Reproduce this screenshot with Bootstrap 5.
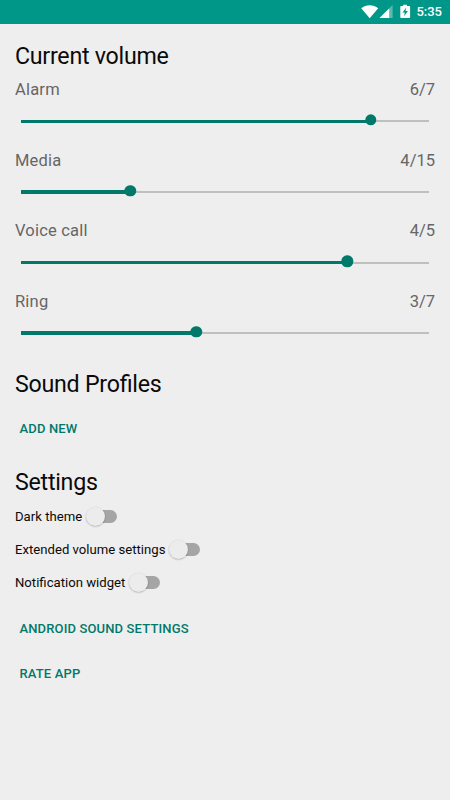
<!DOCTYPE html>
<html lang="en">
<head>
<meta charset="utf-8">
<meta name="viewport" content="width=device-width, initial-scale=1">
<title>Current volume</title>
<link href="https://cdn.jsdelivr.net/npm/bootstrap@5.3.0/dist/css/bootstrap.min.css" rel="stylesheet">
<style>
body{background:#eee;font-family:Roboto,sans-serif;color:#0a0a0a;height:800px;overflow:hidden}
.status{height:23.5px;background:#009688;color:#fff;padding-right:8px}
.clock{font-size:13px;font-weight:500;line-height:24px;margin-left:4px;padding-top:1px}
.screen{padding:18px 15px 0}
.heading{font-size:23.2px;letter-spacing:-.25px;font-feature-settings:"liga" 1;line-height:28px;font-weight:400;margin:0}
.volume{height:70.67px;font-size:16.5px;line-height:22px;color:#666}
.volume-name{letter-spacing:.2px}
.slider{height:40px;padding:0 6px 0 6.3px;margin-top:-1px}
.track{height:2px;background:#bfbfbf;top:1.3px}
.fill{height:3.4px;background:#00796b;left:0;top:-.8px}
.knob{width:11.4px;height:11.4px;border-radius:50%;background:#00796b;top:-.3px;transform:translate(-50%,-50%)}
.volumes{margin:9.5px 0 8px}
.action{font-size:13px;font-weight:500;letter-spacing:.14px;line-height:45px;color:#00796b;padding:0 4.5px;border:0;background:none;display:block}
.profiles{margin:8px 0 17px}
.option{height:33px;font-size:13.15px;line-height:33px}
.options{margin:4.5px 0 7px}
.switch{width:31px;height:13px;border-radius:7px;background:#a5a5a5;margin-left:3.6px;background-clip:content-box;padding-left:8px}
.switch span{width:19px;height:19px;border-radius:50%;background:#ececec;box-shadow:0 .6px 1.6px rgba(0,0,0,.3);left:0;top:-3.5px}
</style>
</head>
<body>
<header class="status d-flex align-items-center justify-content-end">
<svg width="51" height="23" viewBox="361 0 51 23" fill="#fff" aria-hidden="true">
<path d="M361.2 8.2C366 4.2 373.4 4.2 378.2 8.2L369.7 18.2Z"/>
<path opacity=".35" d="M392.6 5V18H379.5Z"/><path d="M389.2 8.4V18H379.5Z"/>
<path d="M403.2 4.7h3.7v1.2h2.4a.8.8 0 0 1 .8.8v10.5a.8.8 0 0 1-.8.8h-8.2a.8.8 0 0 1-.8-.8V6.7a.8.8 0 0 1 .8-.8h2.1Z"/>
<path fill="#009688" d="M406.2 7.5L402.6 12.6H404.8L404.1 16.3L407.9 11.1H405.5Z"/>
</svg>
<span class="clock">5:35</span>
</header>
<main class="screen">
<h1 class="heading">Current volume</h1>
<section class="volumes">
<div class="volume"><div class="d-flex justify-content-between"><span class="volume-name">Alarm</span><span>6/7</span></div><div class="slider d-flex align-items-center"><div class="track position-relative w-100"><div class="fill position-absolute" style="width:85.7%"></div><div class="knob position-absolute" style="left:85.7%"></div></div></div></div>
<div class="volume"><div class="d-flex justify-content-between"><span class="volume-name">Media</span><span>4/15</span></div><div class="slider d-flex align-items-center"><div class="track position-relative w-100"><div class="fill position-absolute" style="width:26.7%"></div><div class="knob position-absolute" style="left:26.7%"></div></div></div></div>
<div class="volume"><div class="d-flex justify-content-between"><span class="volume-name">Voice call</span><span>4/5</span></div><div class="slider d-flex align-items-center"><div class="track position-relative w-100"><div class="fill position-absolute" style="width:80%"></div><div class="knob position-absolute" style="left:80%"></div></div></div></div>
<div class="volume"><div class="d-flex justify-content-between"><span class="volume-name">Ring</span><span>3/7</span></div><div class="slider d-flex align-items-center"><div class="track position-relative w-100"><div class="fill position-absolute" style="width:42.9%"></div><div class="knob position-absolute" style="left:42.9%"></div></div></div></div>
</section>
<h2 class="heading">Sound Profiles</h2>
<div class="profiles"><button class="action">ADD NEW</button></div>
<h2 class="heading">Settings</h2>
<section class="options">
<div class="option d-flex align-items-center"><span>Dark theme</span><div class="switch position-relative"><span class="position-absolute"></span></div></div>
<div class="option d-flex align-items-center"><span>Extended volume settings</span><div class="switch position-relative"><span class="position-absolute"></span></div></div>
<div class="option d-flex align-items-center"><span>Notification widget</span><div class="switch position-relative"><span class="position-absolute"></span></div></div>
</section>
<button class="action">ANDROID SOUND SETTINGS</button>
<button class="action">RATE APP</button>
</main>
<script src="https://cdn.jsdelivr.net/npm/bootstrap@5.3.0/dist/js/bootstrap.bundle.min.js"></script>
</body>
</html>
